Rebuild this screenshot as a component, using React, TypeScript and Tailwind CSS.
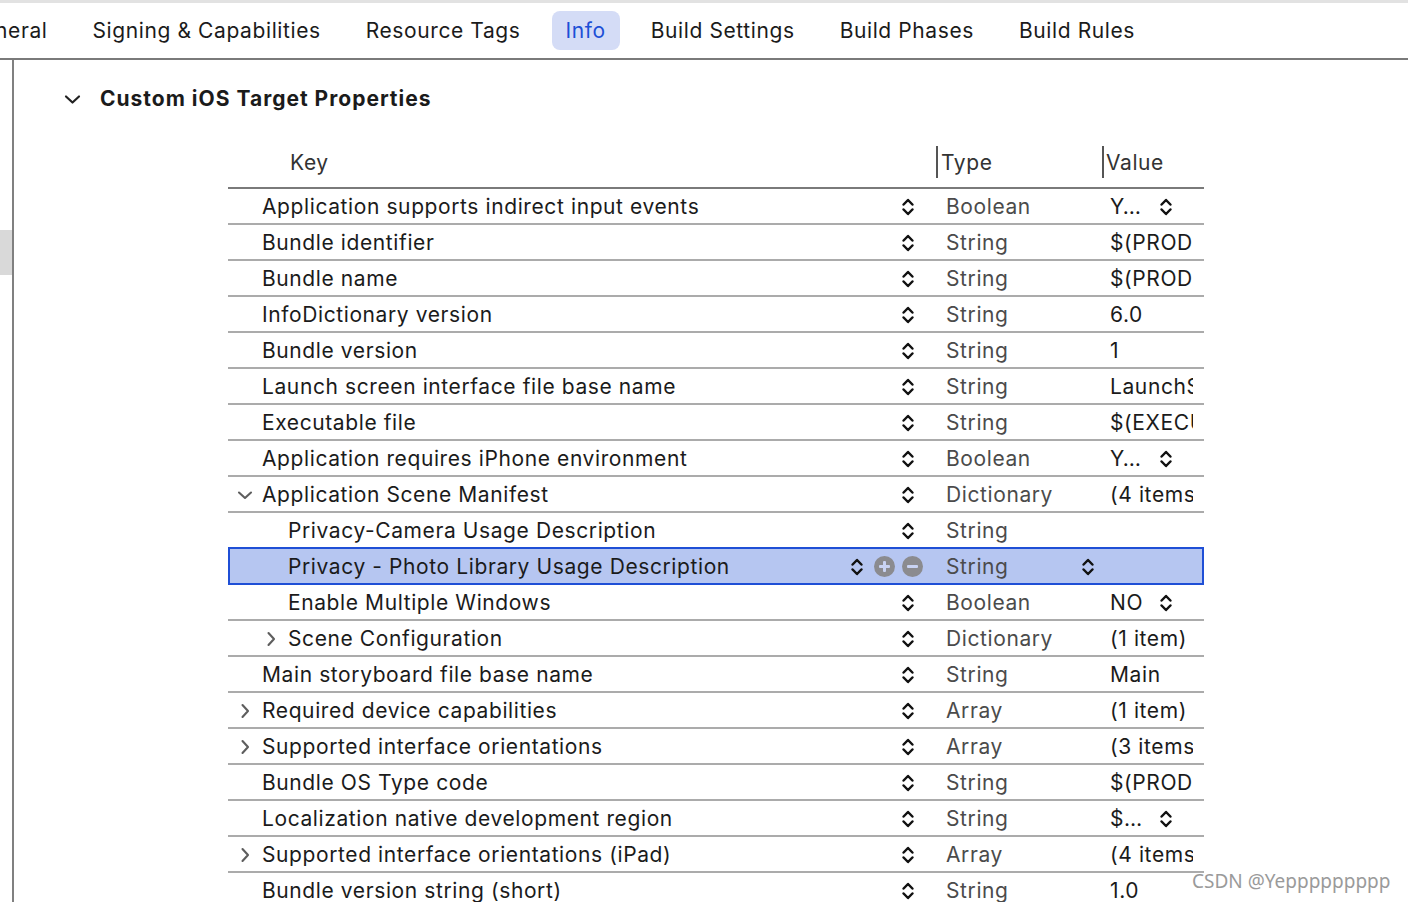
import React from 'react';

type Row = {
  key: string;
  type: string;
  value?: string;
  valueStepper?: boolean;
  indent?: boolean;
  chevron?: 'right' | 'down';
  selected?: boolean;
};

const rows: Row[] = [
  { key: 'Application supports indirect input events', type: 'Boolean', value: 'Y…', valueStepper: true },
  { key: 'Bundle identifier', type: 'String', value: '$(PRODUCT_BUNDLE_IDENTIFIER)' },
  { key: 'Bundle name', type: 'String', value: '$(PRODUCT_NAME)' },
  { key: 'InfoDictionary version', type: 'String', value: '6.0' },
  { key: 'Bundle version', type: 'String', value: '1' },
  { key: 'Launch screen interface file base name', type: 'String', value: 'LaunchScreen' },
  { key: 'Executable file', type: 'String', value: '$(EXECUTABLE_NAME)' },
  { key: 'Application requires iPhone environment', type: 'Boolean', value: 'Y…', valueStepper: true },
  { key: 'Application Scene Manifest', type: 'Dictionary', value: '(4 items)', chevron: 'down' },
  { key: 'Privacy-Camera Usage Description', type: 'String', value: '', indent: true },
  { key: 'Privacy - Photo Library Usage Description', type: 'String', value: '', indent: true, selected: true },
  { key: 'Enable Multiple Windows', type: 'Boolean', value: 'NO', valueStepper: true, indent: true },
  { key: 'Scene Configuration', type: 'Dictionary', value: '(1 item)', indent: true, chevron: 'right' },
  { key: 'Main storyboard file base name', type: 'String', value: 'Main' },
  { key: 'Required device capabilities', type: 'Array', value: '(1 item)', chevron: 'right' },
  { key: 'Supported interface orientations', type: 'Array', value: '(3 items)', chevron: 'right' },
  { key: 'Bundle OS Type code', type: 'String', value: '$(PRODUCT_BUNDLE_PACKAGE_TYPE)' },
  { key: 'Localization native development region', type: 'String', value: '$…', valueStepper: true },
  { key: 'Supported interface orientations (iPad)', type: 'Array', value: '(4 items)', chevron: 'right' },
  { key: 'Bundle version string (short)', type: 'String', value: '1.0' },
];

const tabs = ['General', 'Signing & Capabilities', 'Resource Tags', 'Info', 'Build Settings', 'Build Phases', 'Build Rules'];

const Stepper = () => (
  <svg width="12" height="24" viewBox="0 0 12 24" className="shrink-0">
    <path d="M1.6 9.5 L6 5 L10.4 9.5" fill="none" stroke="#111" strokeWidth="2.5" strokeLinecap="round" strokeLinejoin="round" />
    <path d="M1.6 14.5 L6 19 L10.4 14.5" fill="none" stroke="#111" strokeWidth="2.5" strokeLinecap="round" strokeLinejoin="round" />
  </svg>
);

const Chevron = ({ dir }: { dir: 'right' | 'down' }) =>
  dir === 'right' ? (
    <svg width="10" height="16" viewBox="0 0 10 16">
      <path d="M2.5 2 L8 8 L2.5 14" fill="none" stroke="#5e5e5e" strokeWidth="2.1" strokeLinecap="round" strokeLinejoin="round" />
    </svg>
  ) : (
    <svg width="16" height="10" viewBox="0 0 16 10">
      <path d="M2 2.5 L8 8 L14 2.5" fill="none" stroke="#5e5e5e" strokeWidth="2.1" strokeLinecap="round" strokeLinejoin="round" />
    </svg>
  );

const CircleBtn = ({ minus }: { minus?: boolean }) => (
  <svg width="21" height="21" viewBox="0 0 21 21" className="shrink-0">
    <circle cx="10.5" cy="10.5" r="10.5" fill="#8b8b8f" />
    <rect x="5" y="9" width="11" height="3" rx="1" fill="#c9d3f3" />
    {!minus && <rect x="9" y="5" width="3" height="11" rx="1" fill="#c9d3f3" />}
  </svg>
);

export default function App() {
  return (
    <div
      className="relative h-[902px] w-[1408px] overflow-hidden bg-white text-[21px] tracking-[0.6px] text-[#1b1b1b]"
      style={{ fontFamily: 'Inter, "Noto Sans", sans-serif' }}
    >
      <div className="h-[3px] bg-[#e2e2e2]" />

      {/* tab bar */}
      <div className="flex h-[57px] items-center border-b-2 border-[#7a7a7a]">
        <div className="-ml-[48px] flex items-center gap-[17px]">
          {tabs.map((t) => (
            <div
              key={t}
              className={
                t === 'Info'
                  ? 'flex h-[39px] items-center rounded-lg bg-[#d4dcf6] px-[14px] text-[#1c4fd6]'
                  : 'flex h-[39px] items-center px-[14px]'
              }
            >
              {t}
            </div>
          ))}
        </div>
      </div>

      <div className="flex">
        {/* sidebar edge */}
        <div className="h-[842px] w-[14px] shrink-0 border-r-2 border-[#808080]">
          <div className="mt-[170px] h-[45px] bg-[#d9d9d9]" />
        </div>

        <div className="flex-1">
          <div className="mt-[25px] flex h-[28px] items-center pl-[50px]">
            <svg width="17" height="11" viewBox="0 0 17 11">
              <path d="M2 2.5 L8.5 8.5 L15 2.5" fill="none" stroke="#222" strokeWidth="2.2" strokeLinecap="round" strokeLinejoin="round" />
            </svg>
            <span className="ml-[19px] font-bold tracking-[1px]">Custom iOS Target Properties</span>
          </div>

          <div className="ml-[214px] mt-[27px] w-[976px]">
            {/* header */}
            <div className="flex h-[49px] items-start border-b-2 border-[#7a7a7a] pt-[6px] text-[#333]">
              <div className="flex h-[32px] w-[708px] items-center pl-[62px] pt-[2px]">Key</div>
              <div className="flex h-[32px] w-[166px] items-center">
                <div className="h-[32px] w-[2px] bg-[#555]" />
                <span className="ml-[3px] pt-[2px]">Type</span>
              </div>
              <div className="flex h-[32px] items-center">
                <div className="h-[32px] w-[2px] bg-[#555]" />
                <span className="ml-[2px] pt-[2px]">Value</span>
              </div>
            </div>

            {rows.map((r) => (
              <div
                key={r.key}
                className={
                  r.selected
                    ? '-mt-[2px] flex h-[38px] items-center border-2 border-[#1f4fd6] bg-[#b6c6f1] pt-[1px]'
                    : 'flex h-[36px] items-center border-b-2 border-[#ababab] pt-[2px]'
                }
              >
                <div className={r.selected ? '-ml-[2px] flex w-[708px] items-center' : 'flex w-[708px] items-center'}>
                  <div className={r.indent ? 'flex w-[60px] shrink-0 justify-end pr-[12px]' : 'flex w-[34px] shrink-0 justify-center'}>
                    {r.chevron && <Chevron dir={r.chevron} />}
                  </div>
                  <span className="flex-1 truncate">{r.key}</span>
                  {r.selected ? (
                    <div className="mr-[13px] flex items-center gap-[7px]">
                      <div className="mr-[4px]">
                        <Stepper />
                      </div>
                      <CircleBtn />
                      <CircleBtn minus />
                    </div>
                  ) : (
                    <div className="mr-[22px]">
                      <Stepper />
                    </div>
                  )}
                </div>
                <div className="flex w-[166px] items-center justify-between pl-[10px] pr-[8px] text-[#4b4b4b]">
                  <span>{r.type}</span>
                  {r.selected && <Stepper />}
                </div>
                <div className="flex w-[91px] items-center overflow-hidden whitespace-nowrap pl-[8px]">
                  {r.valueStepper ? (
                    <>
                      <span className="w-[50px] shrink-0">{r.value}</span>
                      <Stepper />
                    </>
                  ) : (
                    <span>{r.value}</span>
                  )}
                </div>
              </div>
            ))}
          </div>
        </div>
      </div>

      <div
        className="absolute left-[1192px] top-[867px] whitespace-nowrap text-[19px] tracking-normal text-[#9a9a9a]"
        style={{ fontFamily: '"Noto Sans", "DejaVu Sans", sans-serif', textShadow: '0 0 2px #fff' }}
      >
        CSDN @Yeppppppppp
      </div>
    </div>
  );
}
